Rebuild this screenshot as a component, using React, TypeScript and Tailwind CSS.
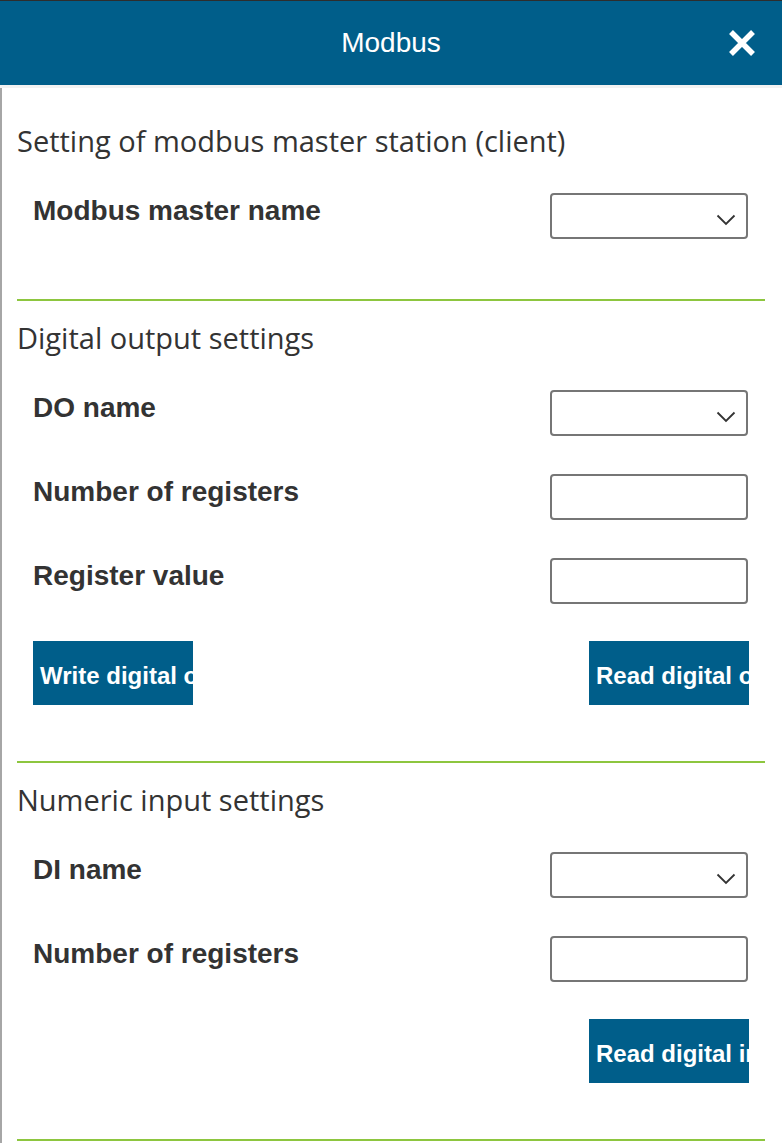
import React from "react";

const heading = "font-['Open_Sans',sans-serif] text-[29px] leading-[36px] text-[#333]";
const label = "font-['Liberation_Sans',Arial,sans-serif] font-bold text-[28px] leading-[36px] text-[#333]";

function Chevron() {
  return (
    <svg width="20" height="12" viewBox="0 0 20 12" className="absolute right-[10px] top-[19px]">
      <path d="M1.5 1.5 L10 10 L18.5 1.5" fill="none" stroke="#333" strokeWidth="1.8" />
    </svg>
  );
}

function Select() {
  return (
    <div className="relative w-[198px] h-[46px] border-2 border-[#767676] rounded-[4px] bg-white">
      <Chevron />
    </div>
  );
}

function Input() {
  return <div className="w-[198px] h-[46px] border-2 border-[#767676] rounded-[4px] bg-white" />;
}

function Row({ name, children }: { name: string; children: React.ReactNode }) {
  return (
    <div className="flex items-start justify-between pl-4">
      <span className={label}>{name}</span>
      {children}
    </div>
  );
}

function Button({ text }: { text: string }) {
  return (
    <div className="w-[160px] h-[64px] bg-[#005e8a] overflow-hidden flex items-center pl-[7px] pt-[5px]">
      <span className="whitespace-nowrap font-['Liberation_Sans',Arial,sans-serif] font-bold text-[24px] text-white">
        {text}
      </span>
    </div>
  );
}

export default function App() {
  return (
    <div className="w-[782px] min-h-[1143px] bg-white">
      <div className="h-[88px] bg-[#005e8a] border-t border-[#2d2d2d] border-b-[3px] border-b-[#f2f2f2] relative flex items-center justify-center">
        <span className="font-['Liberation_Sans',Arial,sans-serif] text-[28px] text-white">Modbus</span>
        <svg width="28" height="28" viewBox="0 0 28 28" className="absolute right-[26px] top-[28px]">
          <path d="M3 3 L25 25 M25 3 L3 25" stroke="white" strokeWidth="5.5" />
        </svg>
      </div>
      <div className="border-l-2 border-[#a6a6a6] pl-[15px] pr-[17px] min-h-[1055px]">
        <section className="pt-[35px] pb-[60px] border-b-2 border-[#8dc63f]">
          <h2 className={heading}>Setting of modbus master station (client)</h2>
          <div className="mt-[34px] flex flex-col gap-[38px] pr-[17px]">
            <Row name="Modbus master name">
              <Select />
            </Row>
          </div>
        </section>
        <section className="pt-[19px] pb-[56px] border-b-2 border-[#8dc63f]">
          <h2 className={heading}>Digital output settings</h2>
          <div className="mt-[34px] flex flex-col gap-[38px] pr-[17px]">
            <Row name="DO name">
              <Select />
            </Row>
            <Row name="Number of registers">
              <Input />
            </Row>
            <Row name="Register value">
              <Input />
            </Row>
          </div>
          <div className="mt-[37px] flex justify-between pl-4 pr-4">
            <Button text="Write digital output" />
            <Button text="Read digital output" />
          </div>
        </section>
        <section className="pt-[19px] pb-[56px] border-b-2 border-[#8dc63f]">
          <h2 className={heading}>Numeric input settings</h2>
          <div className="mt-[34px] flex flex-col gap-[38px] pr-[17px]">
            <Row name="DI name">
              <Select />
            </Row>
            <Row name="Number of registers">
              <Input />
            </Row>
          </div>
          <div className="mt-[37px] flex justify-end pr-4">
            <Button text="Read digital input" />
          </div>
        </section>
      </div>
    </div>
  );
}
